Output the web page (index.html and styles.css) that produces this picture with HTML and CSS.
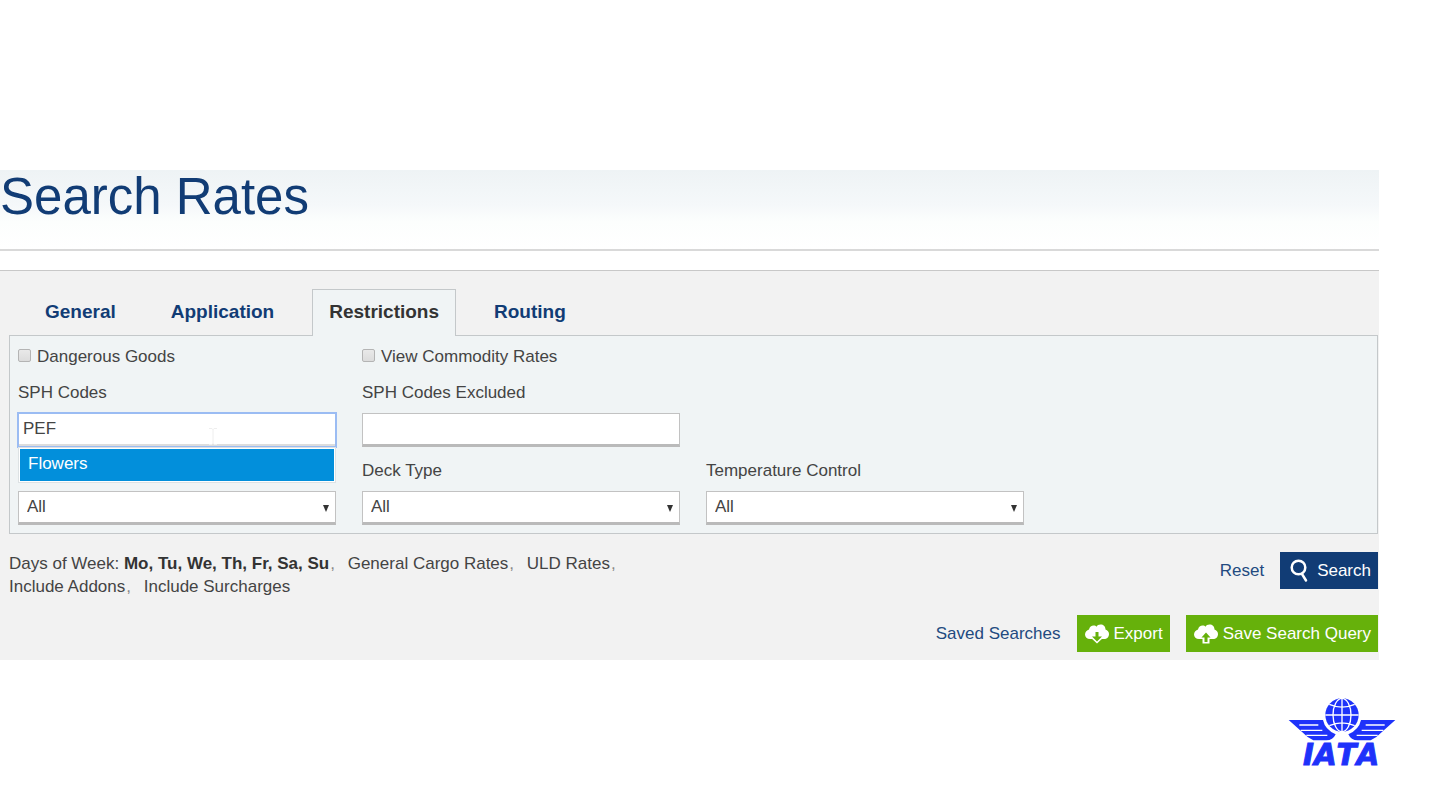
FILE: index.html
```html
<!DOCTYPE html>
<html lang="en">
<head>
<meta charset="utf-8">
<title>Search Rates</title>
<link rel="stylesheet" href="styles.css">
</head>
<body>
<main class="page">
  <header class="page-header"><h1>Search Rates</h1></header>
  <form class="search">
    <nav class="tabs">
      <a class="tab" href="#general">General</a>
      <a class="tab" href="#application">Application</a>
      <a class="tab tab-active" href="#restrictions" aria-current="page">Restrictions</a>
      <a class="tab" href="#routing">Routing</a>
    </nav>
    <section class="panel" id="restrictions">
      <label class="check"><input type="checkbox">Dangerous Goods</label>
      <label class="check"><input type="checkbox">View Commodity Rates</label>
      <div class="field field-first">
        <label for="sph">SPH Codes</label>
        <div class="combo">
          <input class="control control-focus" id="sph" type="text" value="PEF">
          <svg class="beam" viewBox="0 0 8 17" aria-hidden="true"><path d="M0 .5h3l1 1 1-1h3M4 1v15M0 16.5h3l1-1 1 1h3"/></svg>
          <ul class="options"><li>Flowers</li></ul>
        </div>
      </div>
      <div class="field">
        <label for="sph-ex">SPH Codes Excluded</label>
        <input class="control" id="sph-ex" type="text">
      </div>
      <div class="field field-first">
        <div class="select"><select class="control" aria-label="All"><option>All</option></select></div>
      </div>
      <div class="field">
        <label for="deck">Deck Type</label>
        <div class="select"><select class="control" id="deck"><option>All</option></select></div>
      </div>
      <div class="field">
        <label for="temp">Temperature Control</label>
        <div class="select"><select class="control" id="temp"><option>All</option></select></div>
      </div>
    </section>
    <div class="footer">
      <p class="summary">Days of Week: <b>Mo, Tu, We, Th, Fr, Sa, Su</b><span class="sep">,</span> General Cargo Rates<span class="sep">,</span> ULD Rates<span class="sep">,</span> Include Addons<span class="sep">,</span> Include Surcharges</p>
      <div class="actions">
        <a class="link" href="#reset">Reset</a>
        <button class="btn btn-search" type="button">
          <svg class="glass" viewBox="0 0 18 24" aria-hidden="true"><circle cx="8.500" cy="8.500" r="6.800"/><path d="M12 15l4 6.500"/></svg>Search</button>
      </div>
    </div>
    <div class="actions">
      <a class="link" href="#saved">Saved Searches</a>
      <button class="btn btn-green" type="button">
        <svg class="cloud" viewBox="0 0 24 18" aria-hidden="true"><path class="puff" d="M5 14C2 14 0 12 0 9.500S2 5 4 4.500C4.500 2 6.500.500 8.500.500c1.500 0 2.500.500 3 1.200C12.300.200 13.500-.500 15.500-.500c3 0 5 2 5 5 2 .500 3.500 2.500 3.500 4.500 0 3-2 5-5 5z"/><path class="tip" d="M5 12h14l-7 6.500z"/><path class="arrow" d="M10.500 7h3v4.500H17l-5 5-5-5h3.500z"/></svg>Export</button>
      <button class="btn btn-green" type="button">
        <svg class="cloud" viewBox="0 0 24 18" aria-hidden="true"><path class="puff" d="M5 14C2 14 0 12 0 9.500S2 5 4 4.500C4.500 2 6.500.500 8.500.500c1.500 0 2.500.500 3 1.200C12.300.200 13.500-.500 15.500-.500c3 0 5 2 5 5 2 .500 3.500 2.500 3.500 4.500 0 3-2 5-5 5z"/><path class="tip" d="M8.500 11h7v7.500h-7z"/><path class="arrow" d="M10.500 17v-4.500H7.500L12 7.500l4.500 5h-3V17z"/></svg>Save Search Query</button>
    </div>
  </form>
  <footer class="brand">
    <svg class="logo" viewBox="24 24 324 234" role="img">
      <circle class="ink" cx="186" cy="75" r="50"/>
      <g class="lines"><path d="M186 25v100M136 75h100M148 43q38 17 76 0M148 107q38-17 76 0"/><ellipse cx="186" cy="75" rx="27" ry="50"/></g>
      <path class="ink" d="M26 90h103q6 29 38 43-8 18-28 18H100L83 141Z"/>
      <path class="ink" d="M346 90H243q-6 29-38 43 8 18 28 18h39l17-10Z"/>
      <path class="lines" d="M58 105h57M62 121h65M79 136h63M314 105h-57M310 121h-65M293 136h-63"/>
      <text class="wordmark" x="69" y="226">IATA</text>
    </svg>
  </footer>
</main>
</body>
</html>
```
FILE: styles.css
```css
* { box-sizing: border-box; }
body {
  margin: 0;
  background: #fff;
  color: #444;
  font: 17px/20px "Liberation Sans", Arial, sans-serif;
}
.page { padding: 170px 61px 0 0; }
.page-header {
  padding-bottom: 25px;
  border-bottom: 2px solid #d9d9d9;
  background: linear-gradient(#eef3f5, #f5f8fa 45%, #fcfefd 65%, #fff);
}
h1 { margin: 0; color: #113c75; font-size: 51px; font-weight: 400; line-height: 54px; }
.search {
  margin-top: 19px;
  padding: 18px 1px 8px 9px;
  border-top: 1px solid #c8c8c8;
  background: #f2f2f2;
}
.tabs { display: flex; gap: 21px; padding-left: 19px; }
.tab {
  padding: 11px 16px 12px;
  border: 1px solid transparent;
  border-bottom: 0;
  color: #113c75;
  font-size: 19px;
  font-weight: 700;
  line-height: 22px;
  text-decoration: none;
}
.tab-active {
  z-index: 1;
  margin-bottom: -1px;
  border-color: #c4c8ca;
  background: #f0f4f5;
  color: #333;
}
.panel {
  display: grid;
  grid-template-columns: repeat(4, 1fr);
  gap: 14px 26px;
  padding: 11px 9px 8px 8px;
  border: 1px solid #c4c8ca;
  background: #f0f4f5;
}
.check { display: flex; align-items: center; gap: 6px; padding-bottom: 2px; }
.check input {
  appearance: none;
  width: 13px;
  height: 13px;
  margin: 0 0 3px;
  border: 1px solid #b4b4b4;
  border-radius: 2px;
  background: linear-gradient(#e9e9e9, #dcdcdc);
}
.field { display: flex; flex-direction: column; justify-content: flex-end; gap: 10px; }
.field-first { grid-column: 1; }
.combo, .select { position: relative; }
.control {
  display: block;
  width: 100%;
  height: 34px;
  padding: 0 4px 1px;
  appearance: none;
  border: 1px solid #c2c2c2;
  border-bottom: 3px solid #bababa;
  border-radius: 0;
  background: #fff;
  color: #444;
  font: inherit;
}
select.control { padding-left: 8px; }
.control-focus { outline: 2px solid #9bbcf3; outline-offset: -1px; border-color: #fff; border-bottom-color: #ddd; }
.select::after {
  content: "";
  position: absolute;
  top: 14px;
  right: 7px;
  border: solid transparent;
  border-width: 7px 3px 0;
  border-top-color: #333;
}
.beam { position: absolute; left: 191px; top: 15px; width: 8px; height: 17px; fill: none; stroke: #eee; }
.options {
  position: absolute;
  z-index: 2;
  top: 100%;
  left: 0;
  right: 0;
  margin: 0;
  padding: 1px;
  border: 1px solid #dde2e4;
  background: #fff;
  list-style: none;
}
.options li { padding: 5px 8px 7px; background: #028fdb; color: #fff; }
.footer { display: flex; justify-content: space-between; align-items: flex-start; padding: 18px 0 26px; padding-bottom: 17px; }
.summary { max-width: 640px; margin: 0; line-height: 23px; color: #444; }
.summary b { color: #333; }
.sep { margin: 0 8px 0 1px; color: #888; }
.actions { display: flex; justify-content: flex-end; align-items: center; gap: 16px; }
.link { color: #234a80; text-decoration: none; }
.btn {
  display: flex;
  align-items: center;
  gap: 5px;
  height: 37px;
  padding: 0 7px 0 8px;
  border: 0;
  color: #fff;
  font: inherit;
}
.btn-search { gap: 9px; padding-left: 10px; background: #113c75; }
.btn-green { background: #66b10b; }
.glass { width: 18px; height: 24px; fill: none; stroke: #fff; stroke-width: 2.5; stroke-linecap: round; }
.cloud { width: 24px; height: 18px; overflow: visible; }
.puff, .tip { fill: #fff; }
.arrow { fill: #66b10b; }
.brand { display: flex; justify-content: flex-end; margin: 38px -17px 0 0; }
.logo { width: 108px; height: 78px; }
.ink { fill: #1e32fa; }
.lines { fill: none; stroke: #fff; stroke-width: 4; }
.wordmark { fill: #1e32fa; stroke: #1e32fa; stroke-width: 3; font: italic 700 88px "DejaVu Sans", sans-serif; font-kerning: none; }
```
